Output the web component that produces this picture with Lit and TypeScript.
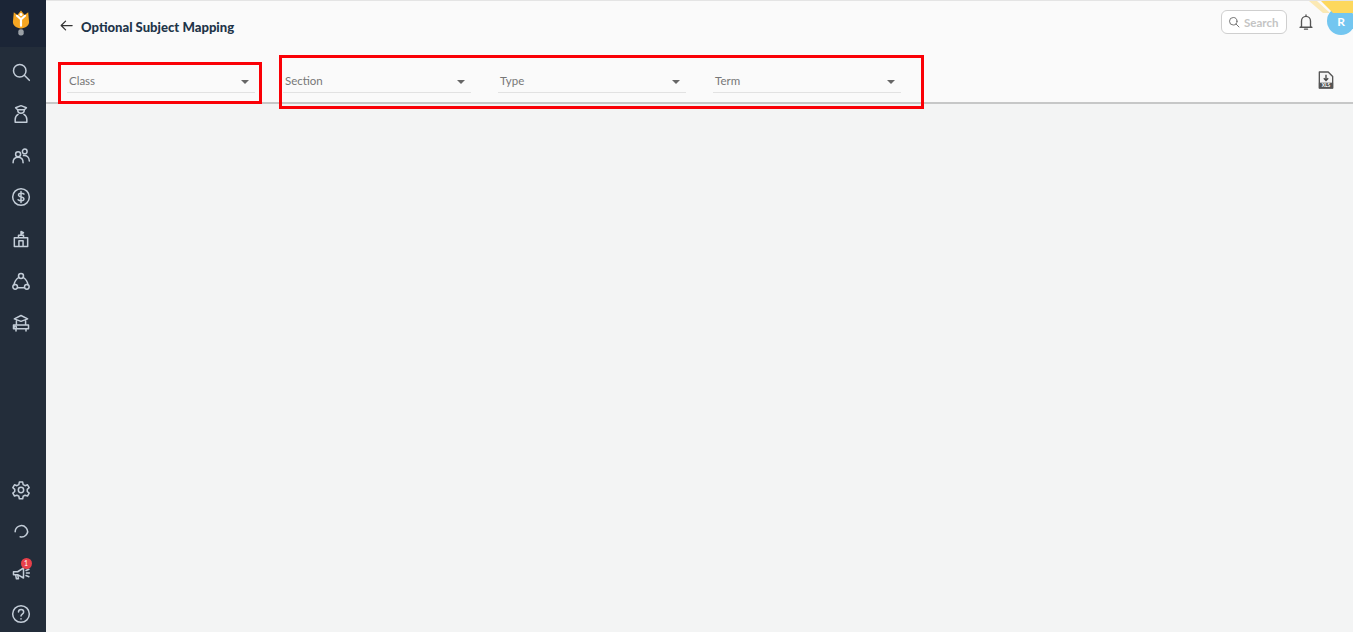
import { LitElement, css, html, svg } from "lit";
import { customElement } from "lit/decorators.js";

const icon = (body: unknown, size = 20, weight = 1.8) => html`<svg
  width=${size}
  height=${size}
  viewBox="0 0 24 24"
  fill="none"
  stroke="currentColor"
  stroke-width=${weight}
  stroke-linecap="round"
  stroke-linejoin="round"
>
  ${body}
</svg>`;

const topIcons = [
  svg`<circle cx="10.500" cy="10.500" r="7.500"/><path d="M16 16l6 6"/>`,
  svg`<path d="M5.500 4.500L12 2l6.500 2.500L16 7H8zM8 7c0 5.500 8 5.500 8 0"/><path d="M8.500 12.500C6 14 5 16 5 18.500V22h14v-3.500c0-2.500-1-4.500-3.500-6"/>`,
  svg`<circle cx="8.500" cy="10" r="3"/><circle cx="16.500" cy="6.500" r="2.800"/><path d="M2.500 20c0-4 2.500-6.500 6-6.500s6 2.500 6 6.500M15 11.500c4-.5 7 2 7 6.500"/>`,
  svg`<circle cx="12" cy="12" r="10"/><path d="M15.500 8.500c-1-1.200-6.500-1.800-6.500 1.200 0 3 6.500 1.600 6.500 4.600 0 3-5.500 2.500-7 1M12 5.500v13"/>`,
  svg`<path d="M4 10.500h16V21H4zM9 10.500v-3h6v3M12 7.500V3M12 3l3 1.500-3 1.500M9.500 21v-7h5v7"/>`,
  svg`<circle cx="12" cy="6" r="3"/><circle cx="5" cy="19" r="2.800"/><circle cx="19" cy="19" r="2.800"/><path d="M9.500 7.500C6 10 4 13 3.800 16.500M14.500 7.500C18 10 20 13 20.200 16.500M8 20h8"/>`,
  svg`<path d="M12 3L4 7l8 3 8-3zM6.500 9v5M17.500 9v5M3 14.500h18V19H3zM6 19v2.500M18 19v2.500"/><circle cx="5" cy="17" r="1.500"/>`,
];

const bottomIcons = [
  svg`<circle cx="12" cy="12" r="3.200"/><path d="M10 2.500h4l.6 3 2.300 1.300 2.900-1 2 3.400-2.300 2v2.600l2.300 2-2 3.400-2.900-1-2.300 1.300-.6 3h-4l-.6-3-2.300-1.300-2.900 1-2-3.400 2.300-2v-2.600l-2.300-2 2-3.400 2.900 1 2.300-1.300z"/>`,
  svg`<path d="M5 13a7.500 7.500 0 0 1 13-5c2.500 2.800 2.200 6.500-.2 9s-4.800 2.500-6.800 2"/>`,
  svg`<path d="M3 10.500h5L15 6v12l-7-4H3zM5.500 14l1 5h2.500l-1-5M18 9l3.500-1.500M18 15l3.500 1.500M18.500 12H22"/>`,
  svg`<circle cx="12" cy="12" r="10"/><path d="M9 9.500c0-4 6.200-4 6.200 0 0 2.800-3.200 2.500-3.200 5"/><path d="M12 17.800v.2"/>`,
];

@customElement("app-root")
export class AppRoot extends LitElement {
  static styles = css`
    :host {
      display: block;
      height: 632px;
      overflow: hidden;
      font-family: "Lato", "Noto Sans", sans-serif;
      background: #f3f4f4;
    }
    .layout {
      display: flex;
      height: 100%;
    }
    .sidebar {
      width: 46px;
      flex: none;
      display: flex;
      flex-direction: column;
      background: #232d3a;
      color: #c3cdd8;
    }
    .logo {
      height: 47px;
      display: flex;
      justify-content: center;
      padding: 8px 5px 0 0;
      box-sizing: border-box;
      background: #1b2536;
    }
    .nav-top {
      display: flex;
      flex-direction: column;
      align-items: center;
      gap: 21.800px;
      padding: 15px 5px 0 0;
    }
    .nav-bottom {
      margin-top: auto;
      display: flex;
      flex-direction: column;
      align-items: center;
      gap: 21.500px;
      padding: 0 5px 8px 0;
    }
    .nav-item {
      position: relative;
      height: 20px;
    }
    .badge {
      position: absolute;
      top: -5px;
      left: 10px;
      width: 11px;
      height: 11px;
      border-radius: 50%;
      background: #e8404a;
      color: #fff;
      font-size: 7px;
      line-height: 11px;
      text-align: center;
    }
    .content {
      flex: 1;
      min-width: 0;
      display: flex;
      flex-direction: column;
    }
    .header {
      position: relative;
      height: 104px;
      box-sizing: border-box;
      background: #fafafa;
      border-top: 1px solid #e4e4e4;
      border-bottom: 2px solid #c6c7c7;
      overflow: hidden;
    }
    .title-row {
      height: 50px;
      display: flex;
      align-items: center;
      padding-left: 13px;
      color: #1f3549;
    }
    .back {
      color: #333;
      margin-right: 7px;
      display: flex;
      margin-top: -2px;
    }
    .title {
      font-size: 13.100px;
      font-weight: 900;
      margin-top: 1px;
    }
    .actions {
      margin-left: auto;
      display: flex;
      align-items: center;
      margin-right: -2px;
      margin-top: -8px;
    }
    .search {
      width: 66px;
      height: 24px;
      box-sizing: border-box;
      border: 1px solid #cfcfcf;
      border-radius: 6px;
      background: #fff;
      display: flex;
      align-items: center;
      gap: 4px;
      padding-left: 6px;
      color: #666;
      font-size: 11.500px;
      font-weight: 700;
    }
    .search span {
      color: #c4c4c4;
    }
    .bell {
      margin-left: 10px;
      color: #555;
      display: flex;
    }
    .avatar {
      margin-left: 12px;
      margin-top: -2px;
      width: 28px;
      height: 28px;
      border-radius: 50%;
      background: #73c6f0;
      color: #fff;
      font-size: 12px;
      font-weight: 700;
      display: flex;
      align-items: center;
      justify-content: center;
    }
    .corner {
      position: absolute;
      top: 0;
      right: 0;
    }
    .filters {
      display: flex;
      align-items: flex-start;
      gap: 27px;
      padding: 21px 0 0 21px;
    }
    .select {
      width: 188px;
      height: 21px;
      box-sizing: border-box;
      border-bottom: 1px solid #e2e2e2;
      display: flex;
      align-items: flex-start;
      justify-content: space-between;
      padding: 1px 6px 0 2px;
      color: #777;
      font-size: 11.500px;
      line-height: 15px;
    }
    .select.first {
      margin-right: 1px;
    }
    .arrow {
      width: 0;
      height: 0;
      margin-top: 7px;
      border-left: 4px solid transparent;
      border-right: 4px solid transparent;
      border-top: 4px solid #666;
    }
    .xls {
      position: absolute;
      right: 19px;
      top: 70px;
      display: flex;
    }
    .note {
      position: absolute;
      box-sizing: border-box;
      border: 3px solid #fa0006;
      pointer-events: none;
    }
    .note-class {
      left: 58px;
      top: 62px;
      width: 204px;
      height: 42px;
    }
    .note-rest {
      left: 279px;
      top: 55px;
      width: 645px;
      height: 54px;
    }
  `;

  render() {
    return html`
      <div class="layout">
        <aside class="sidebar">
          <div class="logo">
            <svg width="18" height="30" viewBox="0 0 20 30">
              <path d="M2 3l4 3 4-5 4 5 4-3 1 11c0 4-4 7-9 7s-9-3-9-7z" fill="#f5a623" />
              <path
                d="M5.500 7l4.500 4 4.500-4M10 11v7"
                fill="none"
                stroke="#fff"
                stroke-width="2.400"
                stroke-linecap="round"
              />
              <circle cx="10" cy="5.500" r="1.700" fill="#fff" />
              <rect x="7" y="22" width="6" height="7" rx="2.500" fill="#9aa0a6" />
            </svg>
          </div>
          <div class="nav-top">
            ${topIcons.map((i) => html`<div class="nav-item">${icon(i)}</div>`)}
          </div>
          <div class="nav-bottom">
            ${bottomIcons.map(
              (i, n) => html`<div class="nav-item">
                ${icon(i)} ${n === 2 ? html`<span class="badge">1</span>` : ""}
              </div>`
            )}
          </div>
        </aside>
        <main class="content">
          <header class="header">
            <svg class="corner" width="50" height="12" viewBox="0 0 50 12">
              <path d="M6 0h8l13 12h-7z" fill="#fbe9b4" />
              <path d="M18 0h32v12H30z" fill="#fdd85d" />
            </svg>
            <div class="title-row">
              <span class="back">
                ${icon(svg`<path d="M21 12H4M10.500 5L3.500 12l7 7"/>`, 15, 2)}
              </span>
              <span class="title">Optional Subject Mapping</span>
              <div class="actions">
                <div class="search">
                  ${icon(svg`<circle cx="10.500" cy="10.500" r="7.500"/><path d="M16 16l6 6"/>`, 12)}
                  <span>Search</span>
                </div>
                <span class="bell">
                  ${icon(
                    svg`<path d="M6 18V10.500a6 6 0 0 1 12 0V18l2 1H4zM12 2.500v2M10 21.500h4"/>`,
                    18
                  )}
                </span>
                <div class="avatar">R</div>
              </div>
            </div>
            <div class="filters">
              ${["Class", "Section", "Type", "Term"].map(
                (label, i) => html`<div class="select ${i === 0 ? "first" : ""}">
                  <span>${label}</span><i class="arrow"></i>
                </div>`
              )}
            </div>
            <svg class="xls" width="16" height="18" viewBox="0 0 18 20">
              <path
                d="M1.500 1h10l5 5v13h-15z"
                fill="#f4f4f4"
                stroke="#555"
                stroke-width="1.500"
                stroke-linejoin="round"
              />
              <path d="M1 13h16v6.500H1z" fill="#555" />
              <path d="M9 4v6M6.500 8L9 10.500 11.500 8" fill="none" stroke="#444" stroke-width="1.500" />
              <text x="9" y="18.300" text-anchor="middle" font-size="5.500" font-weight="700" fill="#fff">XLS</text>
            </svg>
          </header>
        </main>
      </div>
      <div class="note note-class"></div>
      <div class="note note-rest"></div>
    `;
  }
}
